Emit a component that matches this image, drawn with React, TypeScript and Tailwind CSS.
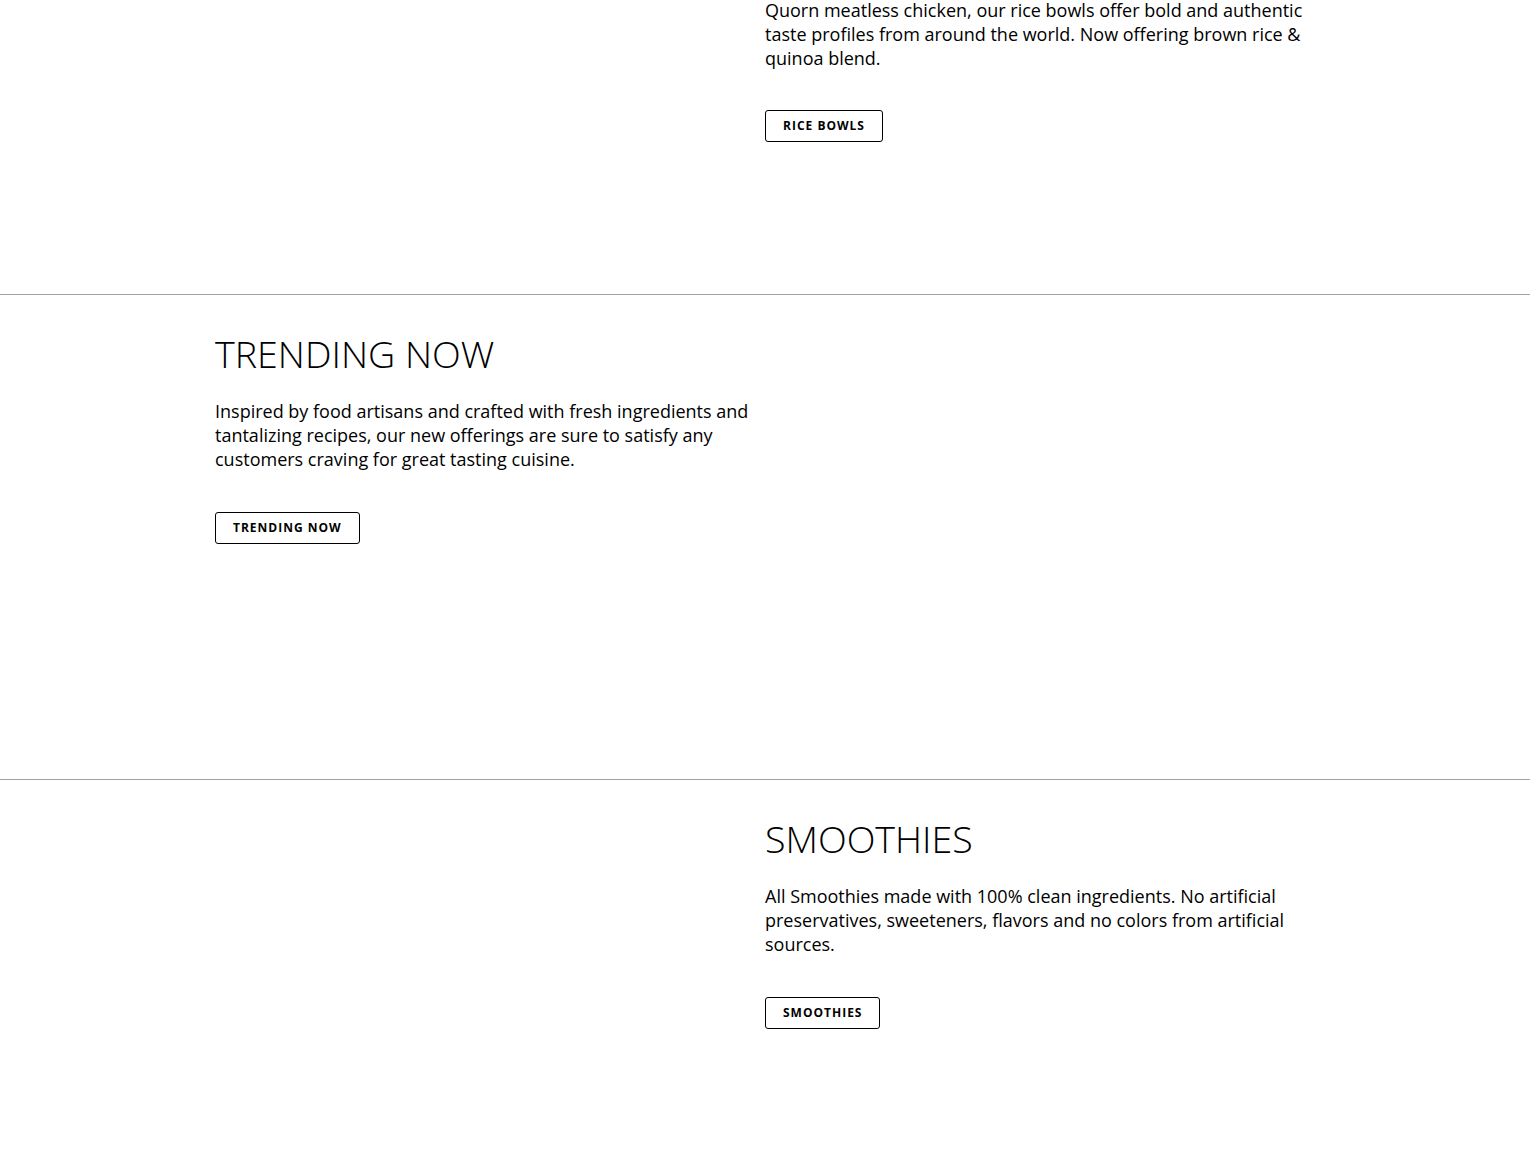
import React from "react";

function Btn({ label }: { label: string }) {
  return (
    <a className="inline-flex h-[32px] items-center rounded-[3px] border border-black px-[17px] text-[12px] font-bold tracking-[1px] text-black">
      {label}
    </a>
  );
}

function Content({
  title,
  text,
  btn,
}: {
  title: string;
  text: string;
  btn: string;
}) {
  return (
    <div className="pt-[35px]">
      <h2 className="text-[37.6px] font-light leading-[48px] text-black">{title}</h2>
      <p className="mt-[21px] text-[18px] leading-[24px] text-black">{text}</p>
      <div className="mt-[41px]">
        <Btn label={btn} />
      </div>
    </div>
  );
}

export default function App() {
  return (
    <div className="min-h-screen bg-white font-['Open_Sans',sans-serif] text-black">
      <section className="h-[294px] overflow-hidden">
        <div className="mx-auto grid w-[1100px] grid-cols-2">
          <div />
          <div className="-mt-[2px] pr-[10px]">
            <p className="text-[18px] leading-[24px]">
              Quorn meatless chicken, our rice bowls offer bold and authentic taste profiles from around the world. Now offering brown rice &amp; quinoa blend.
            </p>
            <div className="mt-[40px]">
              <Btn label="RICE BOWLS" />
            </div>
          </div>
        </div>
      </section>
      <section className="h-[485px] border-t border-[#a0a0a0]">
        <div className="mx-auto grid w-[1100px] grid-cols-2">
          <div className="pr-[10px]">
            <Content
              title="TRENDING NOW"
              text="Inspired by food artisans and crafted with fresh ingredients and tantalizing recipes, our new offerings are sure to satisfy any customers craving for great tasting cuisine."
              btn="TRENDING NOW"
            />
          </div>
          <div />
        </div>
      </section>
      <section className="h-[485px] border-t border-[#a0a0a0]">
        <div className="mx-auto grid w-[1100px] grid-cols-2">
          <div />
          <div className="pr-[10px]">
            <Content
              title="SMOOTHIES"
              text="All Smoothies made with 100% clean ingredients. No artificial preservatives, sweeteners, flavors and no colors from artificial sources."
              btn="SMOOTHIES"
            />
          </div>
        </div>
      </section>
    </div>
  );
}
